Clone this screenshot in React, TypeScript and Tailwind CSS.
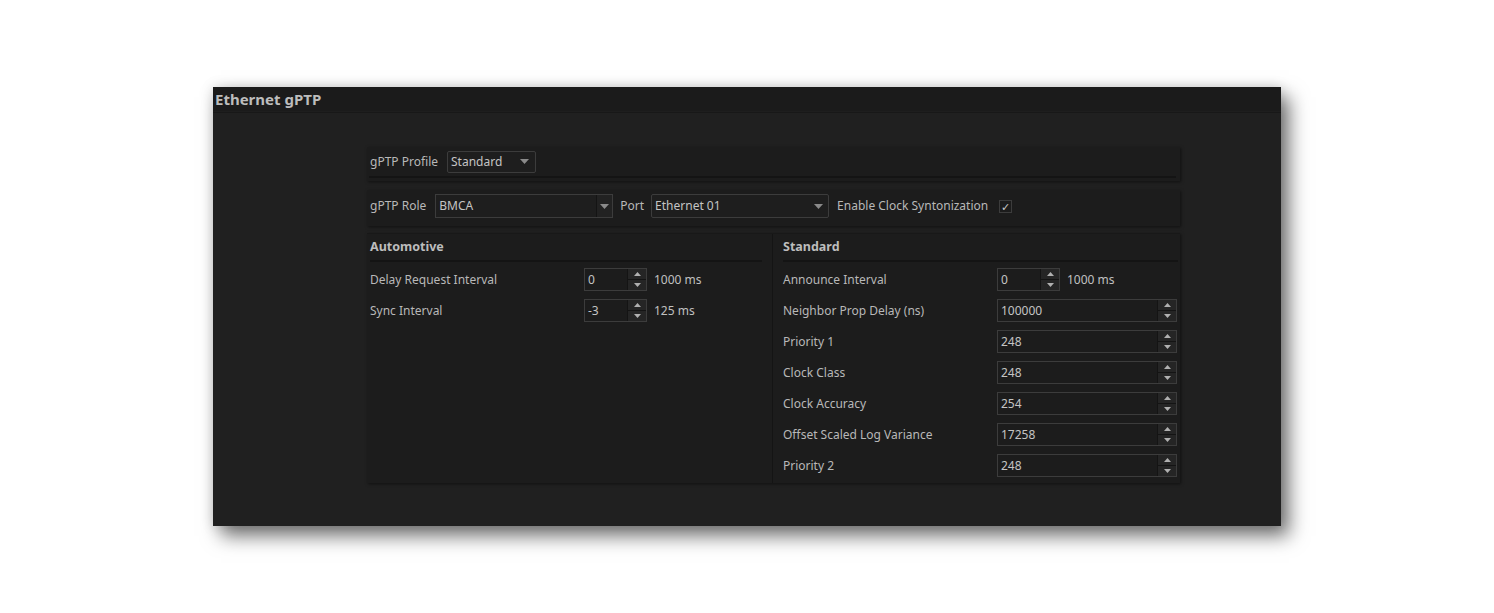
import React from "react";

const font = { fontFamily: '"Noto Sans", "Open Sans", sans-serif' };

function Caret() {
  return (
    <svg width="9" height="5" viewBox="0 0 9 5" className="block">
      <path d="M0 0 L9 0 L4.5 5 Z" fill="#8a8a8a" />
    </svg>
  );
}

function SpinArrows() {
  return (
    <div className="flex flex-col w-[19px] h-full border-l border-[#141414]">
      <div className="flex-1 flex items-center justify-center bg-[#252525] border-b border-[#141414]">
        <svg width="7" height="4" viewBox="0 0 7 4"><path d="M0 4 L7 4 L3.5 0 Z" fill="#b0b0b0" /></svg>
      </div>
      <div className="flex-1 flex items-center justify-center bg-[#252525]">
        <svg width="7" height="4" viewBox="0 0 7 4"><path d="M0 0 L7 0 L3.5 4 Z" fill="#b0b0b0" /></svg>
      </div>
    </div>
  );
}

function Spin({ value, wide }: { value: string; wide?: boolean }) {
  return (
    <div
      className={`flex items-stretch h-[23px] border border-[#3c3c3c] bg-[#1c1c1c] ${wide ? "w-[180px]" : "w-[63px]"}`}
    >
      <div className="flex-1 flex items-center pl-[3px] text-[12px] text-[#c4c4c4]">{value}</div>
      <SpinArrows />
    </div>
  );
}

function Row({ label, children }: { label: string; children: React.ReactNode }) {
  return (
    <div className="flex items-center h-[31px]">
      <div className="w-[214px] text-[12px] text-[#b8b8b8]">{label}</div>
      {children}
    </div>
  );
}

export default function App() {
  return (
    <div className="w-[1494px] h-[613px] bg-white overflow-hidden" style={font}>
      <div className="pt-[87px] pl-[213px]">
        <div className="w-[1068px] h-[439px] bg-[#202020] flex flex-col shadow-[8px_10px_18px_rgba(0,0,0,0.55),0_0_12px_rgba(0,0,0,0.15)]">
          <div className="h-[24px] bg-[#1b1b1b] flex items-center pl-[2px] text-[15px] font-bold text-[#bdbdbd]">
            Ethernet gPTP
          </div>
          <div className="h-[2px] bg-[#181818] border-t border-[#1e1e1e]" />
          <div className="pl-[154px] pt-[34px] flex flex-col">
            {/* Profile panel */}
            <div className="w-[813px] h-[34px] bg-[#1c1c1c] shadow-[1px_1px_3px_rgba(0,0,0,0.5)] flex flex-col">
              <div className="flex items-center h-[29px] pl-[3px] gap-[9px]">
                <span className="text-[12px] text-[#b8b8b8]">gPTP Profile</span>
                <div className="w-[89px] h-[22px] border border-[#3c3c3c] rounded-[2px] bg-[#1e1e1e] flex items-center justify-between pl-[3px] pr-[6px] text-[12px] text-[#c4c4c4]">
                  <span>Standard</span>
                  <Caret />
                </div>
              </div>
              <div className="ml-[2px] mr-[4px] h-[2px] bg-[#141414]" />
            </div>
            {/* Role panel */}
            <div className="mt-[9px] w-[813px] h-[36px] bg-[#1c1c1c] shadow-[1px_1px_3px_rgba(0,0,0,0.5)] flex items-center pl-[3px] pb-[4px]">
              <span className="text-[12px] text-[#b8b8b8]">gPTP Role</span>
              <div className="ml-[9px] w-[178px] h-[24px] border border-[#3c3c3c] bg-[#1e1e1e] flex items-stretch text-[12px] text-[#c4c4c4]">
                <span className="flex-1 flex items-center pl-[3px]">BMCA</span>
                <div className="w-[16px] bg-[#222222] border-l border-[#141414] flex items-center justify-center">
                  <Caret />
                </div>
              </div>
              <span className="ml-[7px] text-[12px] text-[#b8b8b8]">Port</span>
              <div className="ml-[7px] w-[178px] h-[24px] border border-[#3c3c3c] rounded-[2px] bg-[#1e1e1e] flex items-center justify-between pl-[3px] pr-[5px] text-[12px] text-[#c4c4c4]">
                <span>Ethernet 01</span>
                <Caret />
              </div>
              <span className="ml-[8px] text-[12px] text-[#b8b8b8]">Enable Clock Syntonization</span>
              <div className="ml-[11px] w-[13px] h-[13px] border border-[#3c3c3c] bg-[#1c1c1c] flex items-center justify-center text-[11px] leading-none text-[#c8c8c8]">
                ✓
              </div>
            </div>
            {/* Lower panel */}
            <div className="mt-[7px] w-[813px] h-[250px] bg-[#1c1c1c] shadow-[1px_1px_3px_rgba(0,0,0,0.5)] flex border-t border-[#181818]">
              <div className="w-[406px] border-r border-[#141414] pl-[3px] pr-[10px] flex flex-col">
                <div className="h-[26px] flex items-end pb-[3px] text-[12.5px] font-bold text-[#bdbdbd]">Automotive</div>
                <div className="h-[2px] bg-[#141414]" />
                <div className="pt-[2px] flex flex-col">
                  <Row label="Delay Request Interval">
                    <Spin value="0" />
                    <span className="ml-[7px] text-[12px] text-[#c0c0c0]">1000 ms</span>
                  </Row>
                  <Row label="Sync Interval">
                    <Spin value="-3" />
                    <span className="ml-[7px] text-[12px] text-[#c0c0c0]">125 ms</span>
                  </Row>
                </div>
              </div>
              <div className="flex-1 pl-[10px] pr-[2px] flex flex-col">
                <div className="h-[26px] flex items-end pb-[3px] text-[12.5px] font-bold text-[#bdbdbd]">Standard</div>
                <div className="h-[2px] bg-[#141414]" />
                <div className="pt-[2px] flex flex-col">
                  <Row label="Announce Interval">
                    <Spin value="0" />
                    <span className="ml-[7px] text-[12px] text-[#c0c0c0]">1000 ms</span>
                  </Row>
                  <Row label="Neighbor Prop Delay (ns)"><Spin value="100000" wide /></Row>
                  <Row label="Priority 1"><Spin value="248" wide /></Row>
                  <Row label="Clock Class"><Spin value="248" wide /></Row>
                  <Row label="Clock Accuracy"><Spin value="254" wide /></Row>
                  <Row label="Offset Scaled Log Variance"><Spin value="17258" wide /></Row>
                  <Row label="Priority 2"><Spin value="248" wide /></Row>
                </div>
              </div>
            </div>
          </div>
        </div>
      </div>
    </div>
  );
}
